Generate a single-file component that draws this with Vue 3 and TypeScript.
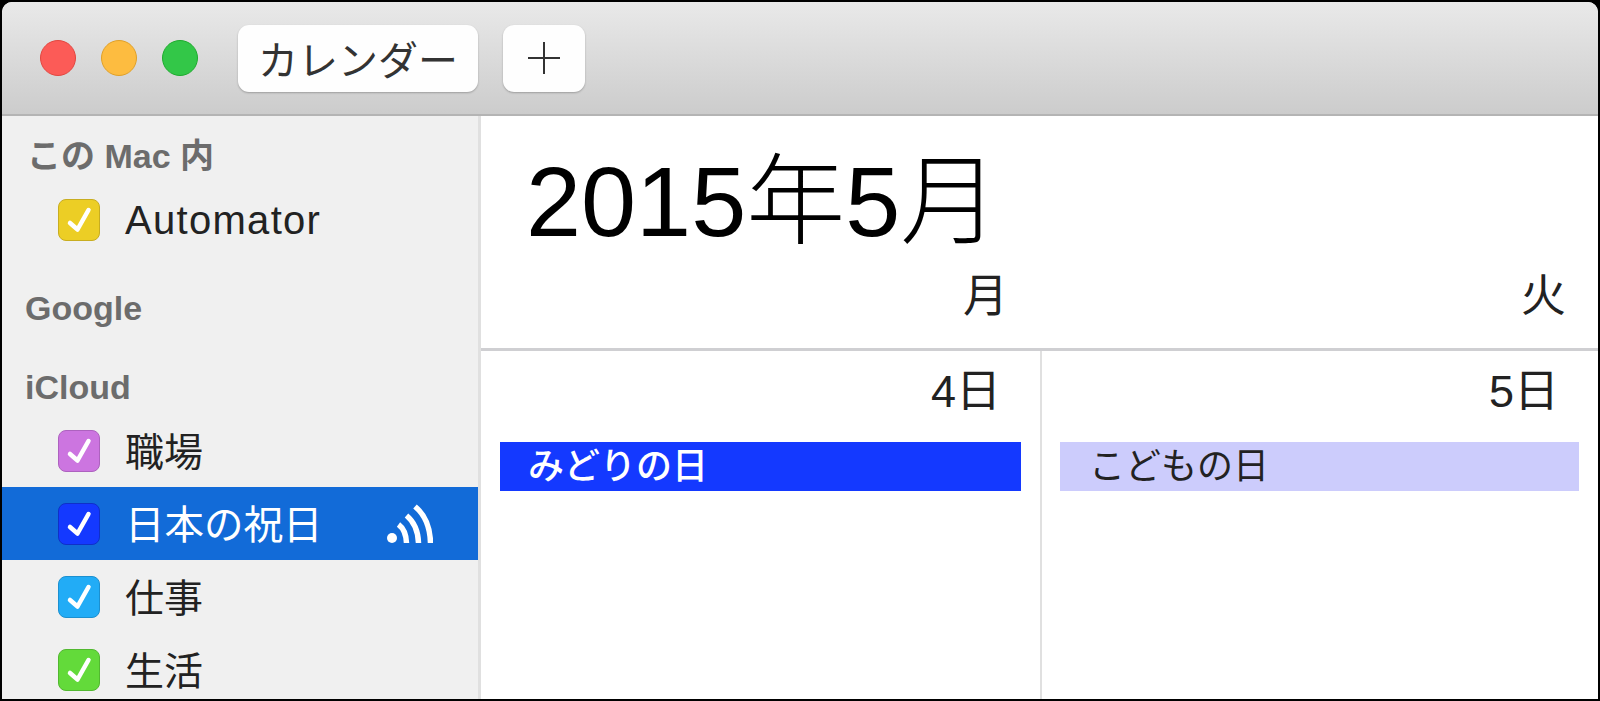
<script setup lang="ts">
interface Cal {
  name: string
  color: string
  edge: string
  selected?: boolean
}

const macCals: Cal[] = [{ name: 'Automator', color: '#ecce25', edge: '#c8ad20' }]

const icloudCals: Cal[] = [
  { name: '職場', color: '#cc75e0', edge: '#ad62bf' },
  { name: '日本の祝日', color: '#1439ff', edge: '#0f30c8', selected: true },
  { name: '仕事', color: '#22acf6', edge: '#1c90d0' },
  { name: '生活', color: '#63da3a', edge: '#52b830' },
]
</script>

<template>
  <div class="frame">
    <div class="window">
      <header class="toolbar">
        <div class="lights">
          <span class="light red"></span>
          <span class="light yellow"></span>
          <span class="light green"></span>
        </div>
        <button class="tool-btn cal-btn">カレンダー</button>
        <button class="tool-btn add-btn">
          <svg width="34" height="34" viewBox="0 0 34 34">
            <path d="M17 1v32M1 17h32" stroke="#333" stroke-width="2" fill="none" />
          </svg>
        </button>
      </header>

      <div class="content">
        <aside class="sidebar">
          <section>
            <h3 class="group-title mac-title">この Mac 内</h3>
            <div v-for="cal in macCals" :key="cal.name" class="cal-row">
              <span class="check" :style="{ backgroundColor: cal.color, borderColor: cal.edge }">
                <svg width="40" height="40" viewBox="0 0 40 40">
                  <path d="M11 23l7.5 6.5L29.5 10" stroke="#fff" stroke-width="4.5" stroke-linecap="round" stroke-linejoin="round" fill="none" />
                </svg>
              </span>
              <span class="cal-name latin">{{ cal.name }}</span>
            </div>
          </section>

          <section>
            <h3 class="group-title">Google</h3>
          </section>

          <section>
            <h3 class="group-title">iCloud</h3>
            <div v-for="cal in icloudCals" :key="cal.name" class="cal-row" :class="{ selected: cal.selected }">
              <span class="check" :style="{ backgroundColor: cal.color, borderColor: cal.edge }">
                <svg width="40" height="40" viewBox="0 0 40 40">
                  <path d="M11 23l7.5 6.5L29.5 10" stroke="#fff" stroke-width="4.5" stroke-linecap="round" stroke-linejoin="round" fill="none" />
                </svg>
              </span>
              <span class="cal-name">{{ cal.name }}</span>
              <svg v-if="cal.selected" class="feed" width="46" height="40" viewBox="0 0 46 40" fill="none" stroke="#fff" stroke-width="5.5">
                <circle cx="5" cy="34" r="5" fill="#fff" stroke="none" />
                <path d="M11.5 20.5Q19 26 19.5 39" />
                <path d="M19.5 11.5Q31 21 31.5 39" />
                <path d="M28 2.5Q43 15 43.5 39" />
              </svg>
            </div>
          </section>
        </aside>

        <main class="month">
          <h1 class="month-title">2015年5月</h1>
          <div class="week-head">
            <div class="weekday mon">月</div>
            <div class="weekday tue">火</div>
          </div>
          <div class="days">
            <div class="day">
              <div class="day-num">4日</div>
              <div class="event holiday-active">みどりの日</div>
            </div>
            <div class="day second">
              <div class="day-num">5日</div>
              <div class="event holiday">こどもの日</div>
            </div>
          </div>
        </main>
      </div>
    </div>
  </div>
</template>

<style>
html,
body {
  margin: 0;
  overflow: hidden;
  background: #000;
}
</style>

<style scoped>
.frame {
  box-sizing: border-box;
  width: 1600px;
  height: 701px;
  padding: 2px;
  background: #000;
  font-family: "Liberation Sans", "Noto Sans CJK JP", sans-serif;
}

.window {
  display: flex;
  flex-direction: column;
  height: 100%;
  overflow: hidden;
  border-radius: 10px 10px 0 0;
  background: #fff;
}

.toolbar {
  box-sizing: border-box;
  flex: none;
  display: flex;
  align-items: center;
  height: 114px;
  padding-left: 38px;
  background: linear-gradient(#e9e9e9, #cccccc);
  border-bottom: 2px solid #b4b4b4;
}

.lights {
  display: flex;
  gap: 25px;
  margin-right: 40px;
}

.light {
  box-sizing: border-box;
  width: 36px;
  height: 36px;
  border-radius: 50%;
  border: 1px solid;
}

.red {
  background: #fc5b57;
  border-color: #e2463f;
}

.yellow {
  background: #fdbc40;
  border-color: #e0a028;
}

.green {
  background: #33c748;
  border-color: #1eab2e;
}

.tool-btn {
  display: flex;
  align-items: center;
  justify-content: center;
  height: 67px;
  padding: 0;
  border: 0;
  border-radius: 11px;
  background: #fefefe;
  box-shadow: 0 1px 2px rgba(0, 0, 0, 0.25);
  font-family: inherit;
  color: #333;
}

.cal-btn {
  width: 240px;
  margin-right: 25px;
  font-size: 40px;
}

.add-btn {
  width: 82px;
}

.content {
  flex: 1;
  display: flex;
  min-height: 0;
}

.sidebar {
  box-sizing: border-box;
  flex: none;
  width: 479px;
  padding-top: 11px;
  background: #f0f0f0;
  border-right: 3px solid #e0e0e0;
  overflow: hidden;
}

.group-title {
  height: 56px;
  margin: 23px 0 0;
  padding-left: 23px;
  font-size: 34px;
  font-weight: 700;
  line-height: 58px;
  color: #6c6c6c;
}

.mac-title {
  margin-top: 0;
  padding-left: 25px;
}

.cal-row {
  display: flex;
  align-items: center;
  height: 73px;
  padding-left: 56px;
  color: #222;
}

.cal-row.selected {
  background: #126bd8;
  color: #fff;
}

.check {
  box-sizing: border-box;
  flex: none;
  display: flex;
  align-items: center;
  justify-content: center;
  width: 42px;
  height: 42px;
  margin-right: 25px;
  border: 1px solid;
  border-radius: 8px;
}

.cal-name {
  margin-bottom: 4px;
  font-size: 39px;
}

.latin {
  margin-bottom: 0;
  margin-top: 2px;
  font-size: 40px;
  letter-spacing: 1.3px;
}

.selected .cal-name {
  font-size: 39.5px;
}

.feed {
  margin-left: auto;
  margin-right: 45px;
}

.month {
  flex: 1;
  min-width: 0;
}

.month-title {
  height: 112px;
  margin: 0;
  padding: 30px 0 0 45px;
  font-size: 99px;
  font-weight: 300;
  line-height: 112px;
  color: #000;
}

.week-head {
  display: grid;
  grid-template-columns: 559px 1fr;
  height: 90px;
  border-bottom: 3px solid #cfcfd2;
}

.weekday {
  text-align: right;
  font-size: 45px;
  line-height: 78px;
  color: #222;
}

.mon {
  padding-right: 32px;
}

.tue {
  padding-right: 32px;
}

.days {
  display: grid;
  grid-template-columns: 559px 1fr;
}

.day {
  height: 350px;
  padding: 0 19px;
}

.second {
  border-left: 2px solid #e0e0e0;
  padding: 0 19px 0 18px;
}

.day-num {
  height: 91px;
  padding-right: 20px;
  text-align: right;
  font-size: 45px;
  line-height: 82px;
  color: #222;
}

.event {
  height: 49px;
  padding-left: 28px;
  font-size: 36px;
  line-height: 49px;
}

.holiday-active {
  background: #1439ff;
  color: #fff;
  font-weight: 500;
}

.holiday {
  padding-left: 29px;
  background: #ccccfc;
  color: #222;
}
</style>
